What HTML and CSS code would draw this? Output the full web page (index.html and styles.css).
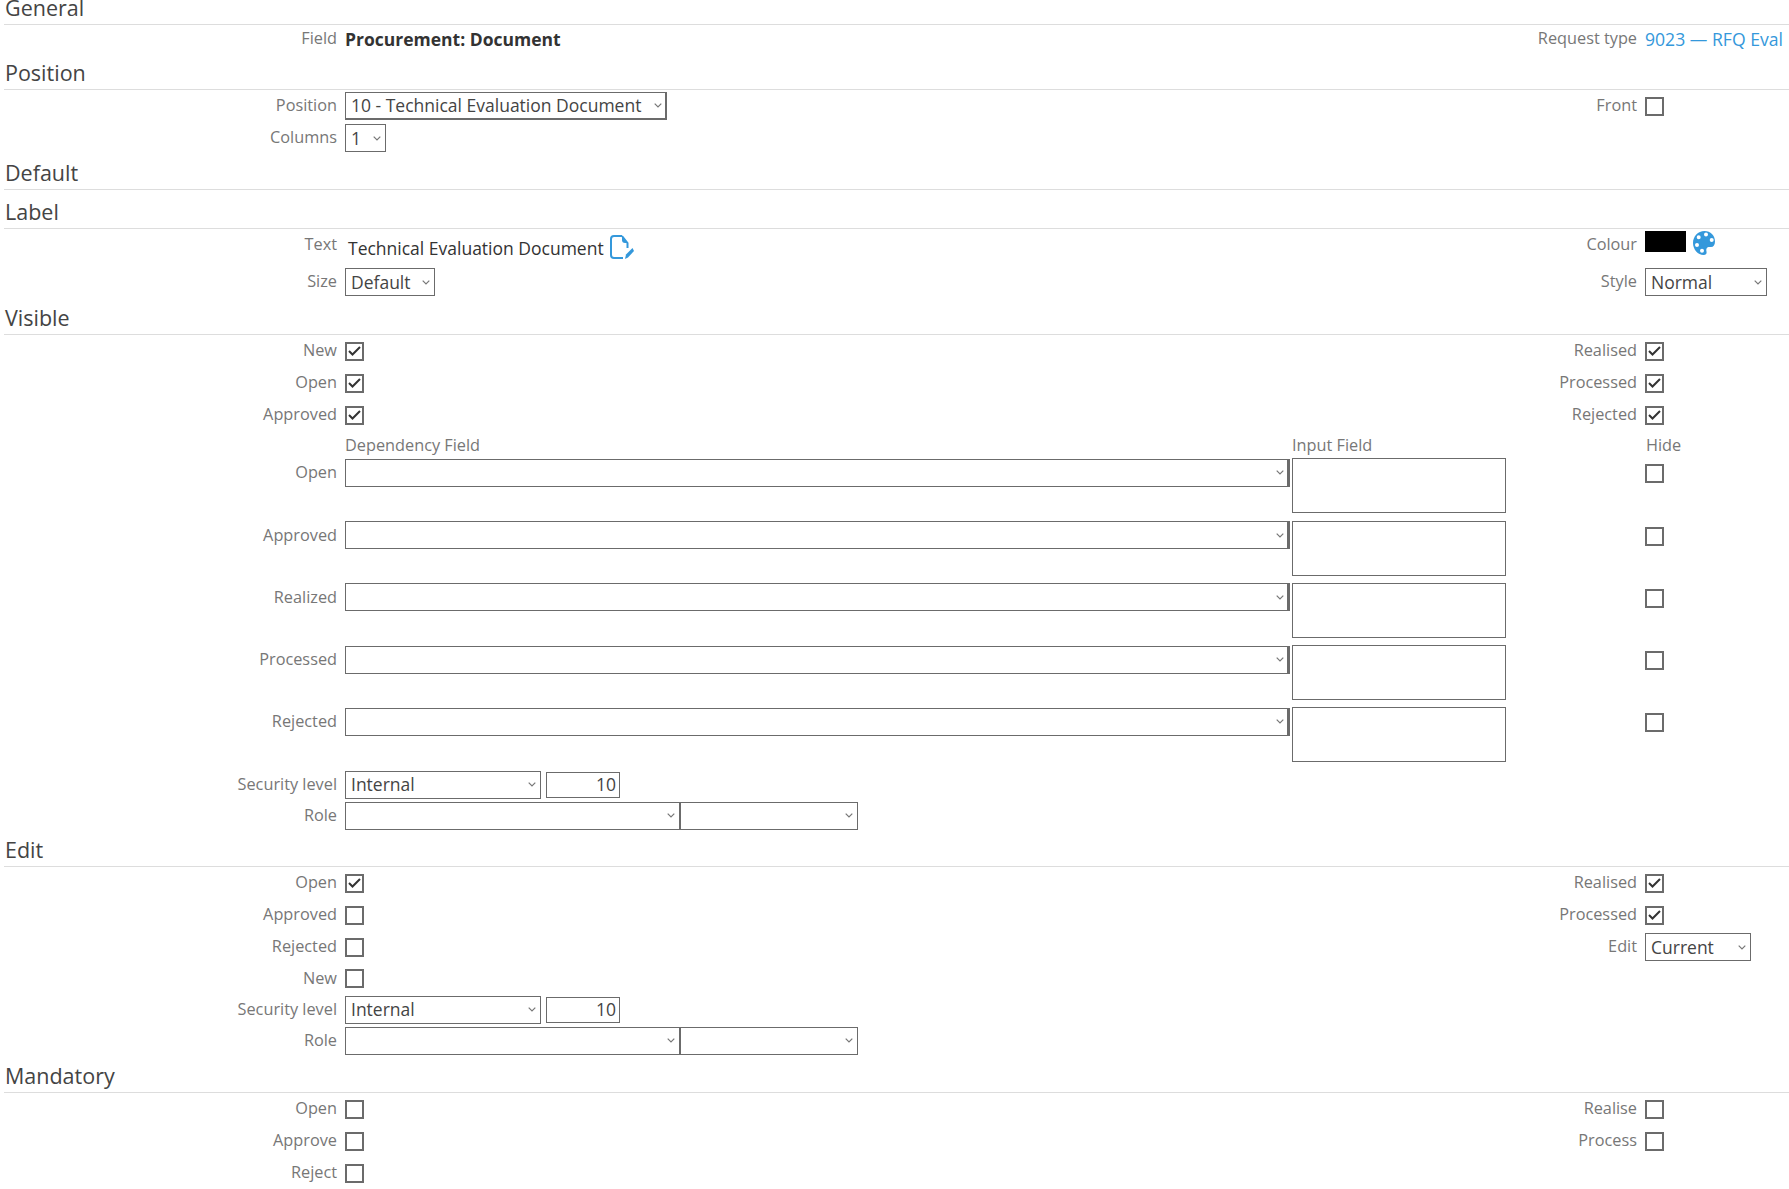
FILE: index.html
```html
<!DOCTYPE html>
<html>

<head>
    <meta charset="utf-8">
    <title>Field</title>
    <link rel="stylesheet" href="styles.css">
</head>

<body>

    <form class="page">

        <h2 class="section first">General</h2>
        <div class="row row-info">
            <label class="lbl">Field</label>
            <div class="ctl"><b class="strong">Procurement: Document</b></div>
            <label class="lbl">Request type</label>
            <div class="ctl"><a class="link">9023 — RFQ Eval</a></div>
        </div>

        <h2 class="section gap5">Position</h2>
        <div class="row">
            <label class="lbl">Position</label>
            <div class="ctl"><select class="w-position"><option>10 - Technical Evaluation Document</option></select></div>
            <label class="lbl">Front</label>
            <div class="ctl"><input type="checkbox"></div>
        </div>
        <div class="row">
            <label class="lbl">Columns</label>
            <div class="ctl"><select class="w-columns"><option>1</option></select></div>
        </div>

        <h2 class="section">Default</h2>

        <h2 class="section gap7">Label</h2>
        <div class="row row-text">
            <label class="lbl">Text</label>
            <div class="ctl label-text">
                Technical Evaluation Document
                <svg class="doc-icon" width="24" height="24" viewBox="0 0 24 24">
                    <path d="M12 1H4a3 3 0 0 0-3 3v16a3 3 0 0 0 3 3h9M12 1l5.500 7v5" fill="none" stroke="#3498db" stroke-width="2"/>
                    <path d="M12 1v4a3 3 0 0 0 3 3h2.500z" fill="#3498db"/>
                    <path d="M15 24l1-4.500 6.500-6.500 1.500 3-6 6.500z" fill="#3498db"/>
                </svg>
            </div>
            <label class="lbl">Colour</label>
            <div class="ctl colour">
                <span class="swatch"></span>
                <svg class="palette" width="22" height="24" viewBox="0 0 22 24">
                    <path fill="#3498db" fill-rule="evenodd" d="M11.500 0C5 0 0 5.500 0 12c0 6.500 5 12 10.500 12 2.500 0 3.500-1.500 3-3.500-.6-2.500.2-4.500 3-4.500h1.500c2.500 0 4-2 4-5.500C22 4.500 17.500 0 11.500 0zM5.700 8.300a2 2 0 1 1 0-4 2 2 0 0 1 0 4zM13 5.500a2 2 0 1 1 0-4 2 2 0 0 1 0 4zM18.700 11a2 2 0 1 1 0-4 2 2 0 0 1 0 4zM4 16a2 2 0 1 1 0-4 2 2 0 0 1 0 4zM9 21.700a2 2 0 1 1 0-4 2 2 0 0 1 0 4z"/>
                </svg>
            </div>
        </div>
        <div class="row">
            <label class="lbl">Size</label>
            <div class="ctl"><select class="w-size"><option>Default</option></select></div>
            <label class="lbl">Style</label>
            <div class="ctl"><select class="w-style"><option>Normal</option></select></div>
        </div>

        <h2 class="section gap5">Visible</h2>
        <div class="row">
            <label class="lbl">New</label>
            <div class="ctl"><input type="checkbox" checked></div>
            <label class="lbl">Realised</label>
            <div class="ctl"><input type="checkbox" checked></div>
        </div>
        <div class="row">
            <label class="lbl">Open</label>
            <div class="ctl"><input type="checkbox" checked></div>
            <label class="lbl">Processed</label>
            <div class="ctl"><input type="checkbox" checked></div>
        </div>
        <div class="row">
            <label class="lbl">Approved</label>
            <div class="ctl"><input type="checkbox" checked></div>
            <label class="lbl">Rejected</label>
            <div class="ctl"><input type="checkbox" checked></div>
        </div>

        <div class="dep-grid dep-head">
            <span class="lbl-plain head-dep">Dependency Field</span>
            <span class="lbl-plain">Input Field</span>
            <span class="lbl-plain head-hide">Hide</span>
        </div>
        <div class="dep-grid dep-row">
            <label class="lbl">Open</label>
            <select class="dep-select"><option></option></select>
            <textarea class="dep-input"></textarea>
            <div class="dep-hide"><input type="checkbox"></div>
        </div>
        <div class="dep-grid dep-row">
            <label class="lbl">Approved</label>
            <select class="dep-select"><option></option></select>
            <textarea class="dep-input"></textarea>
            <div class="dep-hide"><input type="checkbox"></div>
        </div>
        <div class="dep-grid dep-row">
            <label class="lbl">Realized</label>
            <select class="dep-select"><option></option></select>
            <textarea class="dep-input"></textarea>
            <div class="dep-hide"><input type="checkbox"></div>
        </div>
        <div class="dep-grid dep-row">
            <label class="lbl">Processed</label>
            <select class="dep-select"><option></option></select>
            <textarea class="dep-input"></textarea>
            <div class="dep-hide"><input type="checkbox"></div>
        </div>
        <div class="dep-grid dep-row">
            <label class="lbl">Rejected</label>
            <select class="dep-select"><option></option></select>
            <textarea class="dep-input"></textarea>
            <div class="dep-hide"><input type="checkbox"></div>
        </div>

        <div class="row row-sec">
            <label class="lbl">Security level</label>
            <div class="ctl level">
                <select class="w-level"><option>Internal</option></select>
                <input class="num" type="text" value="10">
            </div>
        </div>
        <div class="row row-sm">
            <label class="lbl">Role</label>
            <div class="ctl pair">
                <select class="w-role"><option></option></select>
                <select class="w-role2"><option></option></select>
            </div>
        </div>

        <h2 class="section">Edit</h2>
        <div class="row">
            <label class="lbl">Open</label>
            <div class="ctl"><input type="checkbox" checked></div>
            <label class="lbl">Realised</label>
            <div class="ctl"><input type="checkbox" checked></div>
        </div>
        <div class="row">
            <label class="lbl">Approved</label>
            <div class="ctl"><input type="checkbox"></div>
            <label class="lbl">Processed</label>
            <div class="ctl"><input type="checkbox" checked></div>
        </div>
        <div class="row">
            <label class="lbl">Rejected</label>
            <div class="ctl"><input type="checkbox"></div>
            <label class="lbl">Edit</label>
            <div class="ctl"><select class="w-edit"><option>Current</option></select></div>
        </div>
        <div class="row row-sm">
            <label class="lbl">New</label>
            <div class="ctl"><input type="checkbox"></div>
        </div>
        <div class="row row-sm">
            <label class="lbl">Security level</label>
            <div class="ctl level">
                <select class="w-level"><option>Internal</option></select>
                <input class="num" type="text" value="10">
            </div>
        </div>
        <div class="row row-sm">
            <label class="lbl">Role</label>
            <div class="ctl pair">
                <select class="w-role"><option></option></select>
                <select class="w-role2"><option></option></select>
            </div>
        </div>

        <h2 class="section gap5">Mandatory</h2>
        <div class="row">
            <label class="lbl">Open</label>
            <div class="ctl"><input type="checkbox"></div>
            <label class="lbl">Realise</label>
            <div class="ctl"><input type="checkbox"></div>
        </div>
        <div class="row">
            <label class="lbl">Approve</label>
            <div class="ctl"><input type="checkbox"></div>
            <label class="lbl">Process</label>
            <div class="ctl"><input type="checkbox"></div>
        </div>
        <div class="row">
            <label class="lbl">Reject</label>
            <div class="ctl"><input type="checkbox"></div>
        </div>

    </form>

</body>

</html>
```

FILE: styles.css
```css
html,
body {
    margin: 0;
    background: #fff;
    overflow: hidden;
}

body {
    font-family: "Open Sans", "Liberation Sans", sans-serif;
    font-size: 17.500px;
    color: #333;
}

.page {
    padding-left: 4px;
    margin-top: -7px;
}

.section {
    margin: 4px 0 0;
    padding: 0 0 1px 1px;
    line-height: 30px;
    font-size: 21.500px;
    font-weight: 400;
    color: #444;
    border-bottom: 1px solid #ddd;
}

.section.first {
    margin-top: 0;
}

.section.gap5 {
    margin-top: 5px;
}

.section.gap7 {
    margin-top: 7px;
}

.row {
    display: grid;
    grid-template-columns: 333px 1180px 120px 152px;
    height: 32px;
    align-items: center;
}

.row-info {
    height: 28px;
}

.row-sm {
    height: 31px;
}

.row-sec {
    height: 30.700px;
}

.row-text {
    height: 37px;
}

.ctl {
    padding-left: 8px;
}

.lbl {
    display: block;
    padding-bottom: 2px;
    text-align: right;
    font-size: 16.300px;
    color: #777;
}

.lbl-plain {
    font-size: 16.300px;
    color: #777;
}

.strong {
    font-weight: 700;
    color: #333;
}

.link {
    font-size: 17.600px;
    color: #3498db;
}

select,
.num,
.dep-input {
    box-sizing: border-box;
    margin: 0;
    border: 1px solid #6b6b6b;
    border-radius: 0;
    background-color: #fff;
    font-family: inherit;
    font-size: 17.500px;
    color: #444;
    outline: 0;
}

select {
    appearance: none;
    height: 28px;
    padding: 0 0 1px 5px;
    display: block;
    background: #fff url("data:image/svg+xml,%3Csvg xmlns='http://www.w3.org/2000/svg' viewBox='0 0 8 5'%3E%3Cpath d='M.7.7 4 4l3.300-3.300' fill='none' stroke='%23777' stroke-width='1.200'/%3E%3C/svg%3E") right 4px center/8px 5px no-repeat;
}

.w-position {
    width: 322px;
    border-width: 1px 2px 2px 1px;
    background-position: right 3px center;
}

.w-columns { width: 41px; }
.w-size { width: 90px; }
.w-style { width: 122px; }
.w-edit { width: 106px; }
.w-level { width: 196px; }
.w-role { width: 336px; border-right-width: 2px; }
.w-role2 { width: 177px; border-left: 0; }

.level,
.pair {
    display: flex;
    align-items: center;
}

.level {
    gap: 5px;
}

.num {
    width: 74px;
    height: 26px;
    padding: 0 3px 1px;
    text-align: right;
}

input[type="checkbox"] {
    appearance: none;
    box-sizing: border-box;
    display: block;
    width: 19px;
    height: 19px;
    margin: 0;
    border: 2px solid #6b6b6b;
    background: #fff;
}

input[type="checkbox"]:checked {
    background: #fff url("data:image/svg+xml,%3Csvg xmlns='http://www.w3.org/2000/svg' viewBox='0 0 15 15'%3E%3Cpath d='M2 7l3.500 3.500L13 3' fill='none' stroke='%23333' stroke-width='2'/%3E%3C/svg%3E") center/15px no-repeat;
}

.label-text {
    display: flex;
    align-items: center;
    gap: 6px;
    padding-left: 11px;
}

.doc-icon {
    flex: none;
    margin-top: -1px;
}

.row-text > .lbl {
    align-self: start;
    padding: 4px 0 0;
}

.colour {
    align-self: start;
    display: flex;
    padding-top: 2px;
}

.swatch {
    width: 41px;
    height: 21px;
    background: #000;
}

.palette {
    flex: none;
    margin-left: 7px;
}

.dep-grid {
    display: grid;
    grid-template-columns: 333px 8px 945px 2px 214px 139px 1fr;
}

.dep-head {
    height: 27.300px;
    align-items: center;
}

.dep-head .lbl-plain {
    grid-column: 3;
    padding-top: 1px;
}

.dep-head .lbl-plain:nth-child(2) {
    grid-column: 5;
}

.dep-head .head-hide {
    grid-column: 7;
    padding-left: 1px;
}

.dep-row {
    height: 62.250px;
    align-items: start;
}

.dep-row .lbl {
    grid-column: 1;
    line-height: 28px;
    padding: 0;
}

.dep-select {
    grid-column: 3;
    width: 945px;
    border-right-width: 3px;
    margin-top: .5px;
    background-position: right 3px center;
}

.dep-input {
    grid-column: 5;
    display: block;
    width: 214px;
    height: 55px;
    resize: none;
}

.dep-hide {
    grid-column: 7;
    padding-top: 6px;
}
```
